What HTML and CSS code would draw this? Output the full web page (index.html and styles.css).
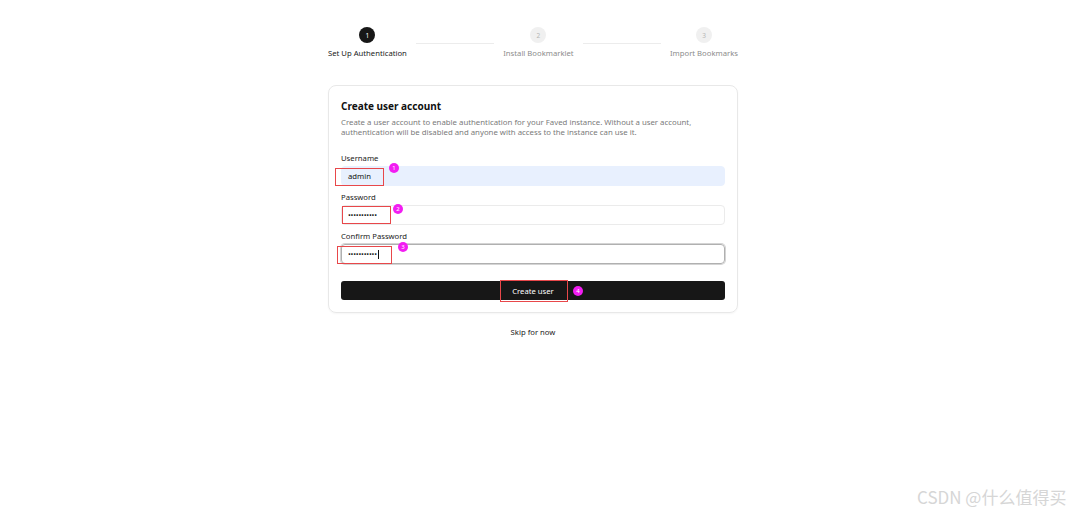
FILE: index.html
```html
<!DOCTYPE html>
<html>
<head>
<meta charset="utf-8">
<link rel="stylesheet" href="styles.css">
</head>
<body>
<div class="page">
  <div class="wrap">
    <div class="stepper">
      <div class="step active">
        <div class="dot">1</div>
        <div class="step-label">Set Up Authentication</div>
      </div>
      <div class="sep"></div>
      <div class="step">
        <div class="dot">2</div>
        <div class="step-label">Install Bookmarklet</div>
      </div>
      <div class="sep"></div>
      <div class="step">
        <div class="dot">3</div>
        <div class="step-label">Import Bookmarks</div>
      </div>
    </div>

    <div class="card">
      <h1 class="title">Create user account</h1>
      <p class="desc">Create a user account to enable authentication for your Faved instance. Without a user account, authentication will be disabled and anyone with access to the instance can use it.</p>

      <div class="field">
        <label class="label">Username</label>
        <div class="input autofill"><span class="value">admin</span>
          <span class="mark box1"></span><span class="num n1">1</span>
        </div>
      </div>
      <div class="field">
        <label class="label">Password</label>
        <div class="input"><span class="value dots">•••••••••••</span>
          <span class="mark box2"></span><span class="num n2">2</span>
        </div>
      </div>
      <div class="field">
        <label class="label">Confirm Password</label>
        <div class="input focus"><span class="value dots">•••••••••••</span><span class="caret"></span>
          <span class="mark box3"></span><span class="num n3">3</span>
        </div>
      </div>

      <div class="btn">Create user
        <span class="mark box4"></span><span class="num n4">4</span>
      </div>
    </div>

    <div class="skip">Skip for now</div>
  </div>
</div>
<div class="watermark"><span>CSDN @什么值得买</span></div>
</body>
</html>
```

FILE: styles.css
```css
* { box-sizing: border-box; }
html, body { margin: 0; padding: 0; background: #fff; }
body {
  font-family: "Noto Sans", "Open Sans", sans-serif;
  color: #171717;
  width: 1080px;
  height: 515px;
  overflow: hidden;
  position: relative;
}
.page {
  display: flex;
  justify-content: center;
  padding-right: 14px;
  padding-top: 27px;
}
.wrap { width: 410px; }

.stepper {
  display: flex;
  align-items: flex-start;
  gap: 9px;
}
.step {
  display: flex;
  flex-direction: column;
  align-items: center;
}
.dot {
  width: 16px;
  height: 16px;
  border-radius: 50%;
  background: #f0f0f0;
  color: #b5b5b5;
  font-size: 6.5px;
  display: flex;
  align-items: center;
  justify-content: center;
}
.step.active .dot { background: #171717; color: #fff; }
.step-label {
  margin-top: 5px;
  font-size: 7.7px;
  line-height: 10px;
  color: #8c8c8c;
  white-space: nowrap;
}
.step.active .step-label { color: #1a1a1a; }
.sep {
  flex: 1;
  height: 1px;
  background: #ececec;
  margin-top: 16px;
}

.card {
  margin-top: 27px;
  border: 1px solid #e8e8e8;
  border-radius: 8px;
  box-shadow: 0 1px 2px rgba(0,0,0,0.04);
  padding: 13px 12px 12px 12px;
}
.title {
  margin: 0;
  font-size: 10px;
  line-height: 14px;
  font-weight: 700;
  color: #111;
}
.desc {
  margin: 4px 0 0;
  font-size: 7.8px;
  line-height: 10px;
  color: #7a7a7a;
}
.field { margin-top: 6px; }
.field:first-of-type { margin-top: 16px; }
.label {
  display: block;
  font-size: 7.7px;
  line-height: 10px;
  color: #1a1a1a;
  margin-bottom: 3px;
}
.input {
  position: relative;
  height: 20px;
  border: 1px solid #ebebeb;
  border-radius: 4px;
  display: flex;
  align-items: center;
  padding-left: 6px;
  font-size: 7.7px;
  color: #111;
}
.input.autofill { background: #e8f0fe; border-color: #e8f0fe; }
.input.focus { border: 1.5px solid #b0b0b0; box-shadow: 0 0 0 1px #d4d4d4; }
.dots { font-size: 7.5px; letter-spacing: -0.2px; }
.caret {
  display: inline-block;
  width: 1px;
  height: 9px;
  background: #111;
  margin-left: 1px;
}

.btn {
  position: relative;
  margin-top: 17px;
  height: 19px;
  border-radius: 3px;
  background: #171717;
  color: #fff;
  font-size: 7.7px;
  display: flex;
  align-items: center;
  justify-content: center;
}

.skip {
  margin-top: 14px;
  text-align: center;
  font-size: 7.7px;
  line-height: 10px;
  color: #1a1a1a;
}

/* annotation overlays */
.mark {
  position: absolute;
  border: 1.5px solid #e8474a;
}
.num {
  position: absolute;
  width: 10px;
  height: 10px;
  border-radius: 50%;
  background: #f21df2;
  color: #fff;
  font-size: 6px;
  line-height: 10px;
  text-align: center;
}
.box1 { left: -7px; top: 1px; width: 49px; height: 18px; }
.n1 { left: 47px; top: -4px; }
.box2 { left: 0px; top: 0px; width: 49px; height: 18px; }
.n2 { left: 51px; top: -2px; }
.box3 { left: -5px; top: 1px; width: 55px; height: 18px; }
.n3 { left: 56px; top: -3px; }
.box4 { left: 159px; top: -1px; width: 68px; height: 22px; }
.n4 { left: 232px; top: 5px; }

.watermark {
  position: absolute;
  left: 917px;
  top: 484px;
  font-size: 17px;
  color: #d6d6d6;
  font-family: "Noto Sans CJK SC", sans-serif;
  white-space: nowrap;
}
```
